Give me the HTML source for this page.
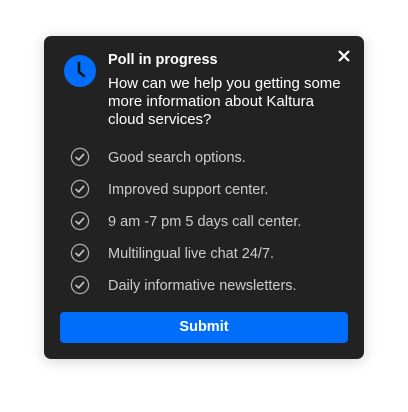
<!DOCTYPE html>
<html><head><style>
body{margin:0;width:408px;height:412px;background:#fff;font-family:"Liberation Sans",sans-serif;position:relative;overflow:hidden}
.card{position:absolute;left:44px;top:36px;width:320px;height:323px;background:#222;border-radius:7px;box-shadow:0 2px 14px rgba(0,0,0,.18)}
.t{position:absolute;left:64px;color:#fff}
.opt{position:absolute;left:64px;color:#ccc;font-size:14.5px;line-height:18px}
.ck{position:absolute;left:26px}
.btn{position:absolute;left:16px;top:276px;width:288px;height:31px;background:#006efa;border-radius:4px;color:#fff;font-weight:bold;font-size:14.5px;text-align:center;line-height:31px}
</style></head><body>
<div class="card">
<svg style="position:absolute;left:20px;top:19px" width="32" height="32" viewBox="0 0 32 32"><circle cx="16" cy="16" r="16" fill="#006efa"/><path d="M15 8v9l5 4" stroke="#111" stroke-width="2.6" fill="none" stroke-linecap="round" stroke-linejoin="round"/></svg>
<svg style="position:absolute;left:294px;top:14px" width="12" height="12" viewBox="0 0 12 12"><path d="M1 1L11 11M11 1L1 11" stroke="#fff" stroke-width="2.2"/></svg>
<div class="t" style="top:16px;font-weight:bold;font-size:14.5px">Poll in progress</div>
<div class="t" style="top:39px;font-size:15px;line-height:18px;white-space:nowrap">How can we help you getting some<br>more information about Kaltura<br>cloud services?</div>
<div class="opt" style="top:113px">Good search options.</div>
<div class="opt" style="top:145px">Improved support center.</div>
<div class="opt" style="top:177px">9 am -7 pm 5 days call center.</div>
<div class="opt" style="top:209px">Multilingual live chat 24/7.</div>
<div class="opt" style="top:241px">Daily informative newsletters.</div>
<svg class="ck" style="top:111px" width="20" height="20" viewBox="0 0 20 20"><circle cx="10" cy="10" r="8.6" stroke="#aaa" stroke-width="1.3" fill="none"/><path d="M6 10.3l2.6 2.6 5-5.5" stroke="#ccc" stroke-width="1.6" fill="none" stroke-linecap="round" stroke-linejoin="round"/></svg>
<svg class="ck" style="top:143px" width="20" height="20" viewBox="0 0 20 20"><circle cx="10" cy="10" r="8.6" stroke="#aaa" stroke-width="1.3" fill="none"/><path d="M6 10.3l2.6 2.6 5-5.5" stroke="#ccc" stroke-width="1.6" fill="none" stroke-linecap="round" stroke-linejoin="round"/></svg>
<svg class="ck" style="top:175px" width="20" height="20" viewBox="0 0 20 20"><circle cx="10" cy="10" r="8.6" stroke="#aaa" stroke-width="1.3" fill="none"/><path d="M6 10.3l2.6 2.6 5-5.5" stroke="#ccc" stroke-width="1.6" fill="none" stroke-linecap="round" stroke-linejoin="round"/></svg>
<svg class="ck" style="top:207px" width="20" height="20" viewBox="0 0 20 20"><circle cx="10" cy="10" r="8.6" stroke="#aaa" stroke-width="1.3" fill="none"/><path d="M6 10.3l2.6 2.6 5-5.5" stroke="#ccc" stroke-width="1.6" fill="none" stroke-linecap="round" stroke-linejoin="round"/></svg>
<svg class="ck" style="top:239px" width="20" height="20" viewBox="0 0 20 20"><circle cx="10" cy="10" r="8.6" stroke="#aaa" stroke-width="1.3" fill="none"/><path d="M6 10.3l2.6 2.6 5-5.5" stroke="#ccc" stroke-width="1.6" fill="none" stroke-linecap="round" stroke-linejoin="round"/></svg>
<div class="btn">Submit</div>
</div>
</body></html>
